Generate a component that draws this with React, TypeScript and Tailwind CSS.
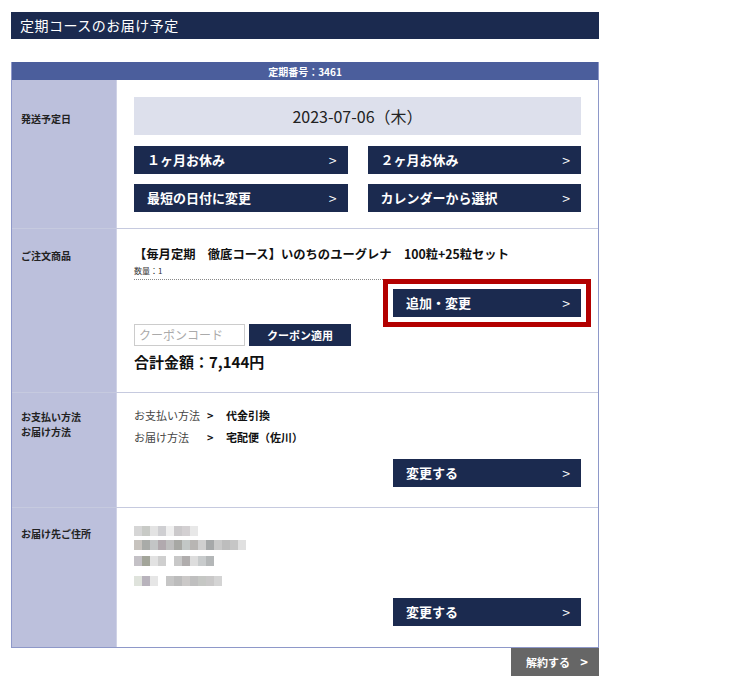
import React from 'react';

const jp = { fontFamily: '"Noto Sans CJK JP", "Liberation Sans", sans-serif' };

function NavyButton({ label, className = '' }: { label: string; className?: string }) {
  return (
    <div className={`flex items-center justify-between bg-[#1b2a4f] pl-[13px] pr-[11px] h-[28px] text-white text-[13px] font-bold ${className}`}>
      <span>{label}</span>
      <span className="font-normal text-[14px]">&gt;</span>
    </div>
  );
}

// blurred (mosaic) address lines
const blur = [
  ['#d6d6d6', '#c8cac6', '#e3e3e3', '#cfcfd2', '#f0f0f0', '#cbc9cb', '#d3d0d2', '#e8e8e8'],
  ['#c7c3be', '#a9aba8', '#c3c5c6', '#b1a9ae', '#bebebe', '#a7a8a4', '#c2c7c6', '#b8b5b3', '#d0cfcf', '#a6a8a9', '#c9c9c9', '#bdbdbd', '#c6c6c6', '#e0e0e0'],
  ['#c4c1c6', '#a3a59a', '#e2e2e2', '#cfcfcf', '#ffffff', '#c8c8c8', '#b0adad', '#dddddd', '#c8cbcc', '#b4b7b8'],
  ['#dfe3dc', '#b8b3bc', '#e6e6e6', '#ffffff', '#c6c6c6', '#bcbcbc', '#cbc9c8', '#bfbfbf', '#c5c7c4', '#c9c8c8', '#d4d4d4'],
];
const blurGap = ['mt-0', 'mt-[4px]', 'mt-[6px]', 'mt-[10px]'];

function Label({ children, pt }: { children: React.ReactNode; pt: string }) {
  return (
    <div className={`bg-[#bcc0dc] border-r border-[#cfd2e6] pl-[9px] ${pt} text-[10px] leading-[15px] font-bold text-[#222]`}>
      {children}
    </div>
  );
}

export default function App() {
  return (
    <div className="w-[750px] h-[690px] bg-white pt-[12px] pl-[11px]" style={jp}>
      <div className="w-[588px]">
        <div className="h-[27px] bg-[#1b2a4f] flex items-center pl-[9px] text-white text-[14px] tracking-[0.5px]">
          定期コースのお届け予定
        </div>

        <div className="mt-[23px] border-x border-b border-[#8e98c9]">
          <div className="h-[18px] bg-[#4b5e9c] flex items-center justify-center text-white text-[10px] font-bold">
            定期番号：3461
          </div>

          {/* 発送予定日 */}
          <div className="grid grid-cols-[105px_1fr] border-b border-[#c6cadf]">
            <Label pt="pt-[31px]">発送予定日</Label>
            <div className="px-[17px] pt-[17px] pb-[16px]">
              <div className="h-[38px] bg-[#dde0ec] flex items-center justify-center text-[16px] text-[#222]">
                2023-07-06（木）
              </div>
              <div className="grid grid-cols-2 gap-x-[20px] gap-y-[10px] mt-[11px]">
                <NavyButton label="１ヶ月お休み" />
                <NavyButton label="２ヶ月お休み" />
                <NavyButton label="最短の日付に変更" />
                <NavyButton label="カレンダーから選択" />
              </div>
            </div>
          </div>

          {/* ご注文商品 */}
          <div className="grid grid-cols-[105px_1fr] border-b border-[#c6cadf]">
            <Label pt="pt-[19px]">ご注文商品</Label>
            <div className="px-[17px] pt-[16px] pb-[20px]">
              <div className="text-[12.3px] font-bold text-[#111] leading-[18px]">
                【毎月定期　徹底コース】いのちのユーグレナ　100粒+25粒セット
              </div>
              <div className="text-[8px] leading-[12px] text-[#333] mt-[2px] pb-[2px] border-b border-dotted border-[#888]">
                数量：1
              </div>
              <div className="flex justify-end mt-[9px]">
                <NavyButton label="追加・変更" className="w-[188px] outline-[5px] outline-solid outline-[#b30000] outline-offset-[5px]" />
              </div>
              <div className="flex gap-[4px] mt-[7px]">
                <div className="w-[111px] h-[22px] border border-[#ccc] flex items-center pl-[4px] text-[12px] text-[#aaa]">
                  クーポンコード
                </div>
                <div className="w-[102px] h-[22px] bg-[#1b2a4f] flex items-center justify-center text-white text-[11px] font-bold">
                  クーポン適用
                </div>
              </div>
              <div className="mt-[6px] text-[15px] font-bold text-[#111] leading-[20px]">合計金額：7,144円</div>
            </div>
          </div>

          {/* お支払い方法 */}
          <div className="grid grid-cols-[105px_1fr] border-b border-[#c6cadf]">
            <Label pt="pt-[16px]">
              お支払い方法
              <br />
              お届け方法
            </Label>
            <div className="px-[17px] pt-[11px] pb-[20px]">
              <div className="grid grid-cols-[73px_19px_1fr] text-[11px] leading-[22px]">
                <span className="text-[#444]">お支払い方法</span>
                <span className="font-bold text-[#111]">&gt;</span>
                <span className="font-bold text-[#111]">代金引換</span>
                <span className="text-[#444]">お届け方法</span>
                <span className="font-bold text-[#111]">&gt;</span>
                <span className="font-bold text-[#111]">宅配便（佐川）</span>
              </div>
              <div className="flex justify-end mt-[11px]">
                <NavyButton label="変更する" className="w-[188px]" />
              </div>
            </div>
          </div>

          {/* お届け先ご住所 */}
          <div className="grid grid-cols-[105px_1fr]">
            <Label pt="pt-[18px]">お届け先ご住所</Label>
            <div className="px-[17px] pt-[18px] pb-[21px]">
              <div className="flex flex-col">
                {blur.map((row, i) => (
                  <div key={i} className={`flex h-[10px] ${blurGap[i]}`}>
                    {row.map((c, j) => (
                      <div key={j} className="w-[8px] h-[10px]" style={{ backgroundColor: c }} />
                    ))}
                  </div>
                ))}
              </div>
              <div className="flex justify-end mt-[12px]">
                <NavyButton label="変更する" className="w-[188px]" />
              </div>
            </div>
          </div>
        </div>

        <div className="flex justify-end">
          <div className="w-[88px] h-[28px] bg-[#666] flex items-center justify-between pl-[15px] pr-[11px] text-white text-[11px] font-bold">
            <span>解約する</span>
            <span className="text-[13px]">&gt;</span>
          </div>
        </div>
      </div>
    </div>
  );
}
